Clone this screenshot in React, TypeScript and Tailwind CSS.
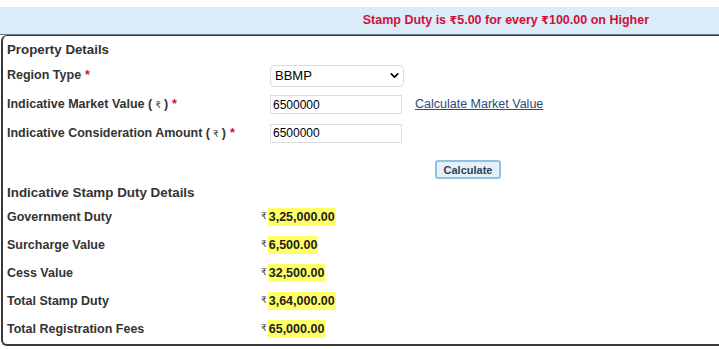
import { ChevronDown } from 'lucide-react';

const duties = [
  { label: 'Government Duty', value: '3,25,000.00' },
  { label: 'Surcharge Value', value: '6,500.00' },
  { label: 'Cess Value', value: '32,500.00' },
  { label: 'Total Stamp Duty', value: '3,64,000.00' },
  { label: 'Total Registration Fees', value: '65,000.00' },
];

function Req() {
  return <span className="ml-1 text-[#d0103a]">*</span>;
}

function Rupee() {
  return <span className="mx-[3px] text-[9px] font-normal">₹</span>;
}

export default function App() {
  return (
    <div className="h-[349px] w-[719px] overflow-hidden bg-white pt-[7px] font-['Liberation_Sans','DejaVu_Sans',sans-serif] text-[#333]">
      <div className="flex h-[28px] items-center justify-end border-b border-[#6b7c8a] bg-[#dcebf8] pr-[70px] text-[12.5px] font-bold text-[#d0103a]">
        <span>
          Stamp Duty is <span className="text-[11px]">₹</span>5.00 for every <span className="text-[11px]">₹</span>100.00 on Higher
        </span>
      </div>

      <div className="ml-px h-[311px] rounded-l-md border-b-2 border-l-2 border-t border-[#3a3a3a] px-[4px] pt-[6px]">
        <h2 className="text-[13.3px] font-bold leading-4">Property Details</h2>

        <div className="mt-[3px] flex h-[29px] items-center">
          <div className="w-[263px] text-[12.5px] font-bold">
            Region Type<Req />
          </div>
          <div className="flex h-[22px] w-[134px] items-center justify-between rounded-sm border border-[#dcdcdc] bg-white pl-[4px] pr-[2px] text-[13px] text-black">
            BBMP
            <ChevronDown className="h-[13px] w-[13px]" strokeWidth={3} />
          </div>
        </div>

        <div className="flex h-[29px] items-center">
          <div className="w-[263px] text-[12.5px] font-bold">
            Indicative Market Value (<Rupee />)<Req />
          </div>
          <div className="flex h-[19px] w-[132px] items-center border border-[#dcdcdc] px-[2px] text-[12px] text-black">
            6500000
          </div>
          <a className="ml-[13px] text-[12.5px] text-[#2b4a7a] underline" href="#">
            Calculate Market Value
          </a>
        </div>

        <div className="flex h-[28px] items-center">
          <div className="w-[263px] text-[12.5px] font-bold">
            Indicative Consideration Amount (<Rupee />)<Req />
          </div>
          <div className="flex h-[19px] w-[132px] items-center border border-[#dcdcdc] px-[2px] text-[12px] text-black">
            6500000
          </div>
        </div>

        <div className="mt-[13px] flex h-[20px]">
          <button className="ml-[428px] h-[19px] w-[66px] rounded-[3px] border-2 border-[#8fc0dc] bg-[#e4f1f9] text-[11px] font-bold text-[#2e4356]">
            Calculate
          </button>
        </div>

        <h2 className="mt-[5px] text-[13.4px] font-bold leading-4">Indicative Stamp Duty Details</h2>

        <div className="mt-[2px] flex flex-col">
          {duties.map((d) => (
            <div key={d.label} className="flex h-[28px] items-center">
              <div className="w-[254px] text-[12.5px] font-bold">{d.label}</div>
              <span className="mr-[1px] text-[9px] text-[#333]">₹</span>
              <span className="bg-[#ffff66] px-[1px] text-[12.5px] font-bold text-[#222]">{d.value}</span>
            </div>
          ))}
        </div>
      </div>
    </div>
  );
}
